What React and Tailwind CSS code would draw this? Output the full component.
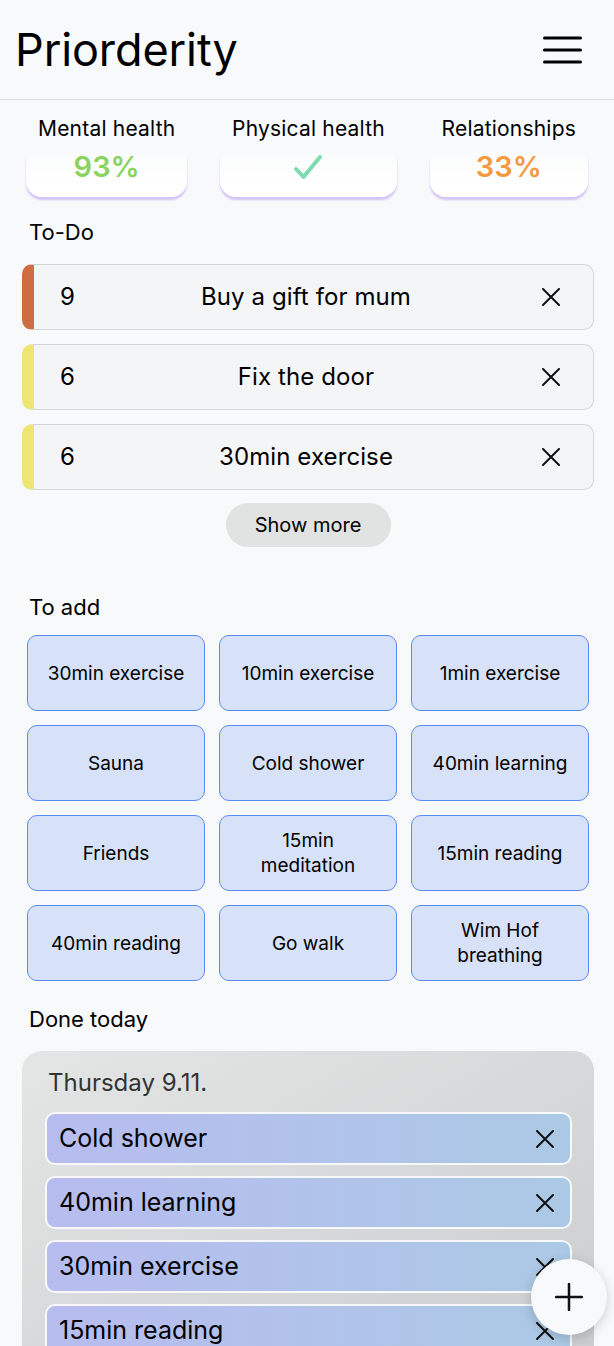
import React from 'react'

const stats = [
  { label: 'Mental health', value: '93%', color: 'text-[#8ad35f]' },
  { label: 'Physical health', check: true },
  { label: 'Relationships', value: '33%', color: 'text-[#f29a3e]' },
]

const todos = [
  { n: 9, text: 'Buy a gift for mum', bar: 'border-l-[#cf6d42]' },
  { n: 6, text: 'Fix the door', bar: 'border-l-[#efe574]' },
  { n: 6, text: '30min exercise', bar: 'border-l-[#efe574]' },
]

const toAdd = [
  '30min exercise', '10min exercise', '1min exercise',
  'Sauna', 'Cold shower', '40min learning',
  'Friends', '15min meditation', '15min reading',
  '40min reading', 'Go walk', 'Wim Hof breathing',
]

const done = ['Cold shower', '40min learning', '30min exercise', '15min reading']

function Cross(){
  return (
    <svg width="18" height="18" viewBox="0 0 18 18" fill="none" stroke="#111" strokeWidth="2" strokeLinecap="round">
      <path d="M1 1 17 17M17 1 1 17" />
    </svg>
  )
}

export default function App(){
  return (
    <div className="min-h-screen bg-[#f8f9fb] font-['Inter',sans-serif] text-black">
      <header className="h-[100px] border-b border-[#dedfe2] flex items-center justify-between pl-[15px] pr-[32px]">
        <h1 className="text-[45px] leading-none font-normal tracking-[-0.1px]">Priorderity</h1>
        <svg width="39" height="28" viewBox="0 0 39 28" stroke="#000" strokeWidth="3" strokeLinecap="round">
          <path d="M1.5 2h36M1.5 14h36M1.5 26h36" />
        </svg>
      </header>

      <div className="flex justify-between px-[26px] pt-[16px]">
        {stats.map(s => (
          <div key={s.label} className="flex flex-col items-center">
            <div className="text-[21px] leading-[26px] px-[12px] whitespace-nowrap tracking-[0.2px]">{s.label}</div>
            <div className="mt-[4px] w-full h-[51px] rounded-[16px] bg-linear-to-b from-white/0 via-white/80 to-white shadow-[0_3px_2px_rgba(196,178,246,0.75)] flex items-center justify-center pb-[10px]">
              {s.check ? (
                <svg width="30" height="26" viewBox="0 0 30 26" fill="none" stroke="#7ddbb0" strokeWidth="4" strokeLinecap="round" strokeLinejoin="round">
                  <path d="M3 15 10.5 23 27 3" />
                </svg>
              ) : (
                <span className={`text-[29px] leading-none font-semibold ${s.color}`}>{s.value}</span>
              )}
            </div>
          </div>
        ))}
      </div>

      <section className="pl-[22px] pr-[20px]">
        <h2 className="pl-[7px] mt-[21px] text-[22px] leading-[28px]">To-Do</h2>
        <div className="mt-[18px] flex flex-col gap-[14px]">
          {todos.map((t, i) => (
            <div key={i} className={`h-[66px] rounded-[10px] border border-[#d3d4d6] border-l-[12px] ${t.bar} bg-[#f4f5f7] flex items-center pl-[26px] pr-[33px] text-[24px] tracking-[0.1px]`}>
              <span className="w-[16px]">{t.n}</span>
              <span className="flex-1 text-center pr-[6px]">{t.text}</span>
              <Cross />
            </div>
          ))}
        </div>
        <div className="flex justify-center mt-[13px]">
          <button className="w-[165px] h-[44px] rounded-full bg-[#e1e2e2] text-[20px]">Show more</button>
        </div>
      </section>

      <section>
        <h2 className="pl-[29px] mt-[46px] text-[22px] leading-[28px]">To add</h2>
        <div className="mt-[14px] pl-[27px] pr-[25px] grid grid-cols-3 gap-[14px]">
          {toAdd.map(a => (
            <div key={a} className="h-[76px] rounded-[10px] border-[1.5px] border-[#5a8cef] bg-[#d7e1f8] flex items-center justify-center text-center px-[16px] text-[19px] leading-[25px]">
              {a}
            </div>
          ))}
        </div>
      </section>

      <section className="pl-[22px] pr-[20px] pb-[40px]">
        <h2 className="pl-[7px] mt-[24px] text-[22px] leading-[28px]">Done today</h2>
        <div className="mt-[18px] rounded-[20px] bg-linear-to-br from-[#e4e5e5] to-[#cbcccd] pt-[17px] pl-[23px] pr-[22px] pb-[22px]">
          <div className="pl-[3px] text-[24px] leading-[30px] text-[#333]">Thursday 9.11.</div>
          <div className="mt-[14px] flex flex-col gap-[11px]">
            {done.map(d => (
              <div key={d} className="h-[53px] rounded-[10px] border-2 border-white/90 bg-linear-to-r from-[#b7bcef] to-[#abc9e5] flex items-center justify-between pl-[12px] pr-[16px] text-[25px]">
                <span>{d}</span>
                <Cross />
              </div>
            ))}
          </div>
        </div>
      </section>

      <button className="fixed bottom-[11px] right-[7px] w-[76px] h-[76px] rounded-full bg-[#f8f9fb] shadow-[0_3px_12px_rgba(0,0,0,0.18)] flex items-center justify-center">
        <svg width="28" height="28" viewBox="0 0 28 28" stroke="#111" strokeWidth="2.5" strokeLinecap="round">
          <path d="M14 1v26M1 14h26" />
        </svg>
      </button>
    </div>
  )
}
